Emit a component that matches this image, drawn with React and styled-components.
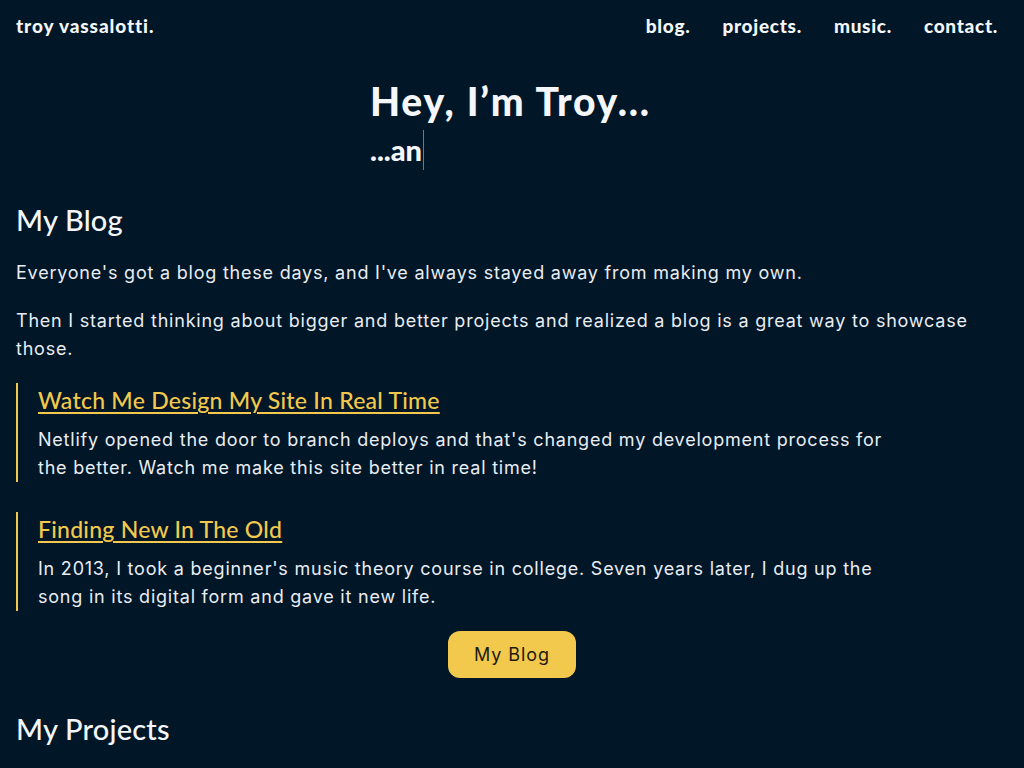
import React from "react";
import styled, { createGlobalStyle } from "styled-components";

const GlobalStyle = createGlobalStyle`
  *, *::before, *::after {
    box-sizing: border-box;
  }
  html, body {
    margin: 0;
    padding: 0;
    background: #011627;
  }
  body {
    font-family: "Inter", "Liberation Sans", sans-serif;
    color: #e8edf3;
  }
`;

const Page = styled.div`
  min-height: 100vh;
  background: #011627;
  overflow: hidden;
`;

const Header = styled.header`
  display: flex;
  align-items: center;
  justify-content: space-between;
  height: 50px;
  padding: 0 26px 0 16px;
`;

const Brand = styled.a`
  font-family: "Lato", "Liberation Sans", sans-serif;
  font-weight: 900;
  font-size: 19px;
  letter-spacing: 0.9px;
  color: #f4f6fa;
  text-decoration: none;
`;

const Nav = styled.nav`
  display: flex;
  gap: 32px;
`;

const NavLink = styled.a`
  font-family: "Lato", "Liberation Sans", sans-serif;
  font-weight: 900;
  font-size: 19px;
  letter-spacing: 0.7px;
  color: #f4f6fa;
  text-decoration: none;
`;

const Hero = styled.section`
  display: flex;
  justify-content: center;
  padding: 28px 0 8px;
`;

const HeroInner = styled.div`
  width: 284px;
`;

const Title = styled.h1`
  margin: 0;
  font-family: "Lato", "Liberation Sans", sans-serif;
  font-weight: 900;
  font-size: 39px;
  line-height: 46px;
  letter-spacing: 1.8px;
  color: #f4f6fa;
`;

const Typed = styled.div`
  display: flex;
  align-items: flex-end;
  height: 40px;
  margin-top: 6px;
  font-family: "Lato", "Liberation Sans", sans-serif;
  font-weight: 900;
  font-size: 29px;
  line-height: 1;
  letter-spacing: 0;
  color: #f4f6fa;
`;

const TypedText = styled.span`
  padding-bottom: 6px;
`;

const Cursor = styled.span`
  display: inline-block;
  align-self: stretch;
  width: 1px;
  margin-left: 1px;
  background: #6b7a8c;
`;

const Main = styled.main`
  padding: 0 16px;
`;

const SectionTitle = styled.h2`
  margin: 0;
  padding: 24px 0 21px;
  font-family: "Lato", "Liberation Sans", sans-serif;
  font-weight: 500;
  font-size: 29px;
  line-height: 36px;
  letter-spacing: 0.2px;
  color: #f4f6fa;
`;

const Text = styled.p`
  margin: 0 0 20px;
  font-size: 18px;
  line-height: 28px;
  letter-spacing: 0.78px;
  color: #e8edf3;
`;

const PostList = styled.div`
  display: flex;
  flex-direction: column;
  gap: 30px;
`;

const Post = styled.article`
  border-left: 2px solid #f2c94c;
  padding: 1px 0 0 20px;
  max-width: 889px;
`;

const PostTitle = styled.a`
  display: block;
  font-family: "Lato", "Liberation Sans", sans-serif;
  font-weight: 500;
  font-size: 23px;
  line-height: 32px;
  letter-spacing: 0.25px;
  color: #f2c94c;
  text-decoration: underline;
  text-underline-offset: 3px;
  text-decoration-thickness: 2px;
`;

const PostText = styled.p`
  margin: 10px 0 0;
  font-size: 18px;
  line-height: 28px;
  letter-spacing: 0.78px;
  color: #e8edf3;
`;

const ButtonRow = styled.div`
  display: flex;
  justify-content: center;
  padding: 20px 0 9px;
`;

const Button = styled.a`
  display: inline-flex;
  align-items: center;
  justify-content: center;
  width: 128px;
  height: 47px;
  border-radius: 12px;
  background: #f2c94c;
  color: #1d1a10;
  font-size: 18px;
  letter-spacing: 0.9px;
  text-decoration: none;
`;

const posts = [
  {
    title: "Watch Me Design My Site In Real Time",
    text:
      "Netlify opened the door to branch deploys and that's changed my development process for the better. Watch me make this site better in real time!",
  },
  {
    title: "Finding New In The Old",
    text:
      "In 2013, I took a beginner's music theory course in college. Seven years later, I dug up the song in its digital form and gave it new life.",
  },
];

function App() {
  return (
    <Page>
      <GlobalStyle />
      <Header>
        <Brand href="#">troy vassalotti.</Brand>
        <Nav>
          <NavLink href="#">blog.</NavLink>
          <NavLink href="#">projects.</NavLink>
          <NavLink href="#">music.</NavLink>
          <NavLink href="#">contact.</NavLink>
        </Nav>
      </Header>
      <Hero>
        <HeroInner>
          <Title>Hey, I’m Troy...</Title>
          <Typed>
            <TypedText>...an</TypedText>
            <Cursor />
          </Typed>
        </HeroInner>
      </Hero>
      <Main>
        <SectionTitle>My Blog</SectionTitle>
        <Text>
          Everyone's got a blog these days, and I've always stayed away from
          making my own.
        </Text>
        <Text>
          Then I started thinking about bigger and better projects and realized
          a blog is a great way to showcase those.
        </Text>
        <PostList>
          {posts.map((post) => (
            <Post key={post.title}>
              <PostTitle href="#">{post.title}</PostTitle>
              <PostText>{post.text}</PostText>
            </Post>
          ))}
        </PostList>
        <ButtonRow>
          <Button href="#">My Blog</Button>
        </ButtonRow>
        <SectionTitle>My Projects</SectionTitle>
      </Main>
    </Page>
  );
}

export default App;
